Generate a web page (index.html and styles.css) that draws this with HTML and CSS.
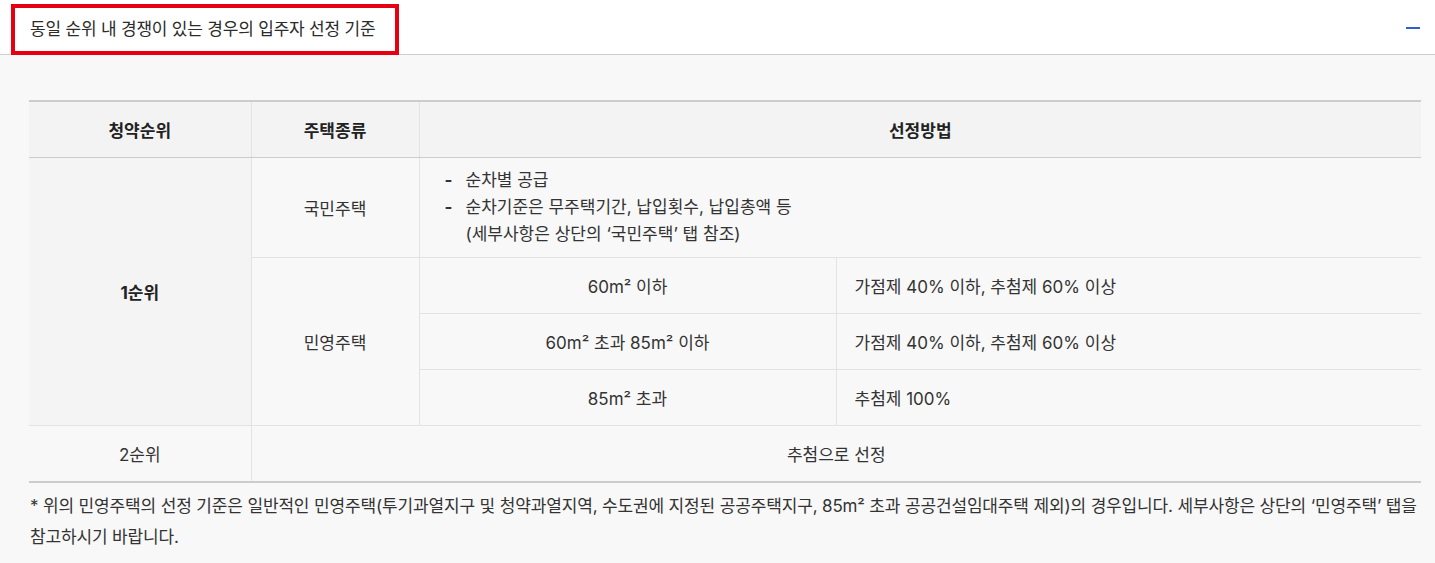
FILE: index.html
```html
<!DOCTYPE html>
<html lang="ko">
<head>
<meta charset="utf-8">
<title>입주자 선정 기준</title>
<link rel="stylesheet" href="styles.css">
</head>
<body>
<section class="acc">
  <div class="acc-head">
    <h3 class="acc-title">동일 순위 내 경쟁이 있는 경우의 입주자 선정 기준</h3>
    <span class="acc-toggle" aria-label="접기"></span>
    <span class="highlight"></span>
  </div>
  <div class="acc-body">
    <table class="rule">
      <colgroup>
        <col class="c1"><col class="c2"><col class="c3"><col class="c4">
      </colgroup>
      <thead>
        <tr>
          <th>청약순위</th>
          <th>주택종류</th>
          <th colspan="2">선정방법</th>
        </tr>
      </thead>
      <tbody>
        <tr class="tall">
          <td rowspan="4" class="rank">1순위</td>
          <td>국민주택</td>
          <td colspan="2" class="left">
            <ul class="dash">
              <li>순차별 공급</li>
              <li>순차기준은 무주택기간, 납입횟수, 납입총액 등<br>(세부사항은 상단의 ‘국민주택’ 탭 참조)</li>
            </ul>
          </td>
        </tr>
        <tr>
          <td rowspan="3">민영주택</td>
          <td>60m² 이하</td>
          <td class="left pad">가점제 40% 이하, 추첨제 60% 이상</td>
        </tr>
        <tr>
          <td>60m² 초과 85m² 이하</td>
          <td class="left pad">가점제 40% 이하, 추첨제 60% 이상</td>
        </tr>
        <tr>
          <td>85m² 초과</td>
          <td class="left pad">추첨제 100%</td>
        </tr>
        <tr class="last">
          <td>2순위</td>
          <td colspan="3">추첨으로 선정</td>
        </tr>
      </tbody>
    </table>
    <p class="note">* 위의 민영주택의 선정 기준은 일반적인 민영주택(투기과열지구 및 청약과열지역, 수도권에 지정된 공공주택지구, 85m² 초과 공공건설임대주택 제외)의 경우입니다. 세부사항은 상단의 ‘민영주택’ 탭을 참고하시기 바랍니다.</p>
  </div>
</section>
</body>
</html>
```

FILE: styles.css
```css
html, body {
  margin: 0;
  padding: 0;
  background: #f8f8f8;
}
body {
  font-family: Inter, "Noto Sans CJK KR", sans-serif;
  color: #333;
  font-size: 17px;
}
.acc-head {
  position: relative;
  background: #fff;
  height: 55px;
  border-bottom: 1px solid #cfcfcf;
  box-sizing: border-box;
  display: flex;
  align-items: center;
  justify-content: space-between;
  padding: 0 15px 0 30px;
}
.acc-title {
  margin: 0;
  font-size: 17px;
  font-weight: 400;
  color: #2b2b2b;
  letter-spacing: -0.2px;
}
.acc-toggle {
  width: 14px;
  height: 2px;
  background: #2f5fd0;
  margin-top: 2px;
}
.highlight {
  position: absolute;
  left: 11px;
  top: 4px;
  width: 388px;
  height: 51px;
  border: 4px solid #e60012;
  box-sizing: border-box;
  pointer-events: none;
}
.acc-body {
  padding: 45px 14px 0 29px;
}
.rule {
  width: 1392px;
  border-collapse: collapse;
  table-layout: fixed;
  border-top: 2px solid #cccccc;
  border-bottom: 2px solid #cccccc;
}
.c1 { width: 222px; }
.c2 { width: 168px; }
.c3 { width: 417px; }
.c4 { width: 585px; }
.rule th {
  height: 55px;
  background: #f3f3f3;
  font-weight: 700;
  font-size: 17px;
  color: #222;
  border-left: 1px solid #e3e3e3;
  border-bottom: 1px solid #cccccc;
  padding: 0;
}
.rule td {
  height: 55px;
  text-align: center;
  border-left: 1px solid #e3e3e3;
  border-bottom: 1px solid #e3e3e3;
  padding: 0;
  font-size: 17px;
  color: #333;
}
.rule th:first-child,
.rule td.rank,
.rule tr.last td:first-child {
  border-left: none;
}
.rule td.rank {
  background: #f4f4f4;
  font-weight: 700;
  color: #222;
}
.rule tr.tall td {
  height: 99px;
}
.rule td.left {
  text-align: left;
}
.rule td.pad {
  padding-left: 18px;
}
.dash {
  list-style: none;
  margin: 0;
  padding: 0 0 0 25px;
  line-height: 27px;
}
.dash li {
  position: relative;
  padding-left: 21px;
}
.dash li::before {
  content: "-";
  position: absolute;
  left: 0;
  top: 0;
  font-weight: 700;
}
.note {
  margin: 8px 0 0 1px;
  line-height: 31px;
  font-size: 17px;
  color: #333;
  word-break: keep-all;
  letter-spacing: -0.15px;
}
```
